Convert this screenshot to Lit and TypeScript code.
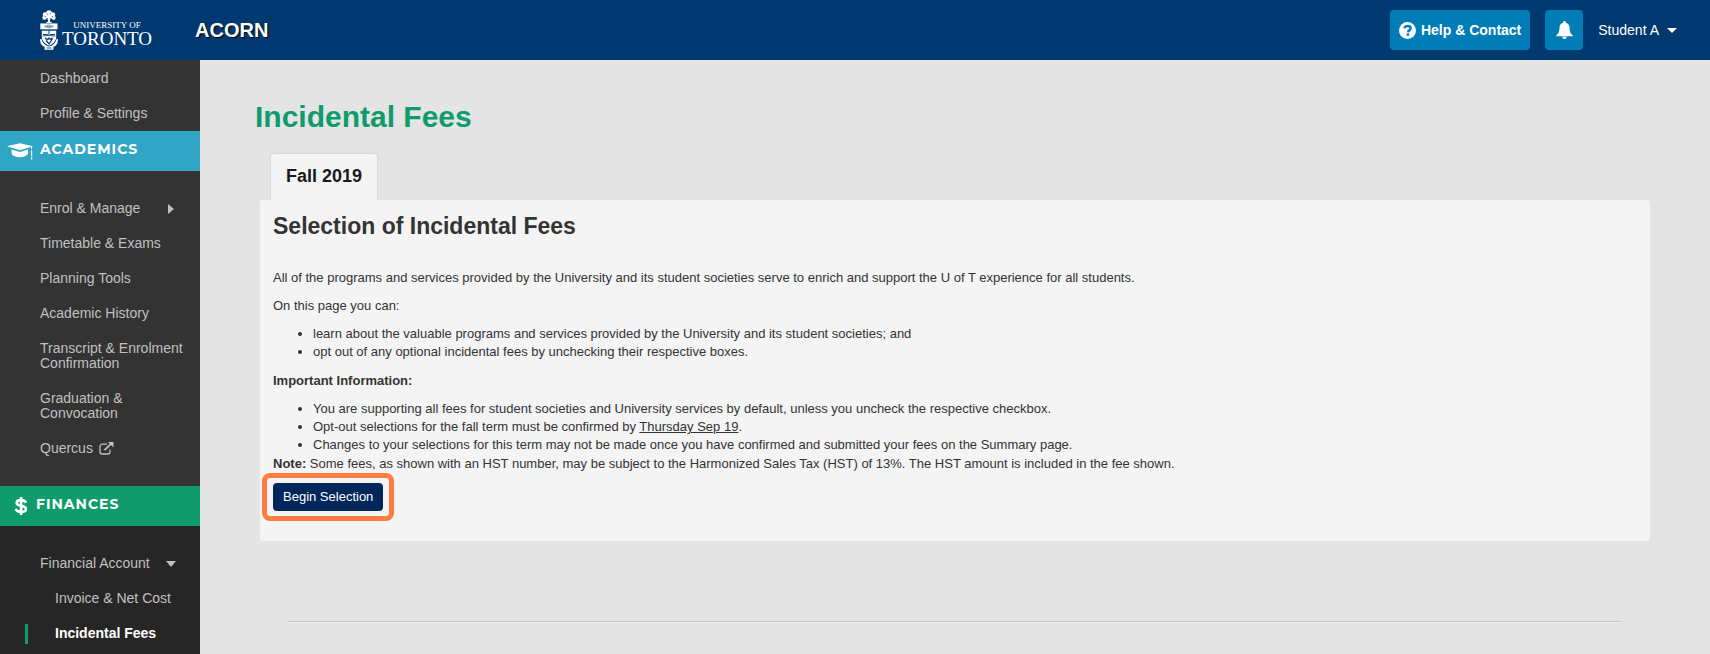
import { LitElement, html, css, svg, nothing } from "lit";
import { customElement, property } from "lit/decorators.js";
import { classMap } from "lit/directives/class-map.js";

interface NavItem {
  label: string;
  arrow?: "right" | "down";
  external?: boolean;
  nested?: boolean;
  current?: boolean;
}

const GENERAL: NavItem[] = [{ label: "Dashboard" }, { label: "Profile & Settings" }];

const ACADEMICS: NavItem[] = [
  { label: "Enrol & Manage", arrow: "right" },
  { label: "Timetable & Exams" },
  { label: "Planning Tools" },
  { label: "Academic History" },
  { label: "Transcript & Enrolment Confirmation" },
  { label: "Graduation & Convocation" },
  { label: "Quercus", external: true },
];

const FINANCES: NavItem[] = [
  { label: "Financial Account", arrow: "down" },
  { label: "Invoice & Net Cost", nested: true },
  { label: "Incidental Fees", nested: true, current: true },
];

const crest = svg`
  <svg class="crest" viewBox="0 0 18 40" width="18" height="40" aria-hidden="true">
    <g fill="#fff">
      <circle cx="9" cy="3" r="2.8"/><circle cx="5.2" cy="4.6" r="2.4"/><circle cx="12.8" cy="4.6" r="2.4"/>
      <circle cx="4.4" cy="7.8" r="2.1"/><circle cx="13.6" cy="7.8" r="2.1"/><circle cx="9" cy="6.8" r="3"/>
      <path d="M8 8h2v3.6l2.4 1.4H5.6L8 11.600z"/>
      <path d="M0.300 13.400h17.200v6.200H.3z"/>
      <path d="M1.800 20.400h14.400v6.600c0 4.200-3 7-7.200 8.800c-4.200-1.800-7.200-4.600-7.200-8.800z"/>
      <path d="M0 29l2 .6 1.200 3.400 3 2.600h5.600l3-2.600L16 29.600l2-.6-.6 4.600-2.400 2.600-1.600.6v3H4.600v-3L3 36.200.6 33.600z"/>
    </g>
    <g fill="none" stroke="#003970">
      <path d="M6.600 3.600l1 1M10.800 3.200l-1 1.200M4.600 6.200l1.200.6M13.200 6.200l-1.200.6M7 8.400l1 .6M11 8.400l-1 .6" stroke-width=".8"/>
      <path d="M4.600 16.400q4.400-3 8.800 0q-4.400 3-8.800 0zM7 16.500h4" stroke-width=".7" opacity=".75"/>
      <path d="M0 20h18" stroke-width=".9"/>
      <path d="M3 24.600h4.800M10.200 24.600H15M9 20.600v4.600" stroke-width="1"/>
      <path d="M2.600 26l6.400-.6 6.400.6" stroke-width=".8"/>
      <path d="M5 28.200l2.800 1.400 1.200-1.400 1.600 1 2-1.400M6 30.400l3 3.600 3.400-5" stroke-width="1.300"/>
      <path d="M2.200 29.800c.8 3 3 5 6.800 6.400c3.800-1.400 6-3.400 6.800-6.400" stroke-width=".8"/>
      <path d="M6.400 38h5.200" stroke-width=".8"/>
    </g>
  </svg>`;

const helpIcon = svg`
  <svg viewBox="0 0 17 17" width="17" height="17" aria-hidden="true">
    <circle cx="8.500" cy="8.500" r="8.500" fill="#fff"/>
    <path d="M5.500 6.400C5.800 4.600 7 3.900 8.600 3.900c1.700 0 3 1 3 2.500c0 1.900-2.300 1.900-2.500 3.900" fill="none" stroke="#007cb6" stroke-width="2.500"/>
    <path d="M7.600 11.400h2.600v2.400H7.600z" fill="#007cb6"/>
  </svg>`;

const bellIcon = svg`
  <svg viewBox="0 0 17 18" width="17" height="18" aria-hidden="true">
    <path fill="#fff" d="M8.500 0c.8 0 1.300.5 1.300 1.200v.5c2.500.6 3.700 2.500 3.700 5 0 3.900 1.100 6 3.200 7.600v.9H.3v-.9c2.100-1.600 3.200-3.700 3.200-7.600 0-2.500 1.200-4.400 3.700-5v-.5C7.200.5 7.700 0 8.500 0zM6.200 15.800h4.600c0 1.300-1 2.200-2.300 2.200s-2.300-.9-2.300-2.200z"/>
  </svg>`;

const capIcon = svg`
  <svg viewBox="0 0 26 17" width="26" height="17" aria-hidden="true">
    <path fill="#fff" d="M0 3.200L12.800.3 26 3.200l-1 .4v3h-.8v-2.800L13 7.200z"/>
    <path fill="#fff" d="M4.600 6.400L13 9l8-2.600v4.400c-1.200 2.200-4.200 3.400-8.200 3.400S5.600 13 4.600 10.800z"/>
    <path fill="#fff" d="M24 7.400h1.200v6H24zM23.900 14.400h1.400v2h-1.400z"/>
  </svg>`;

const dollarIcon = svg`
  <svg viewBox="0 0 12 18" width="12" height="18" aria-hidden="true">
    <path d="M10.900 5.700C10.200 3.900 8.500 3.200 6.200 3.200c-2.500 0-4.500.9-4.500 2.700 0 3.700 9.200 1.900 9.200 6 0 1.900-2 2.900-4.700 2.900-2.800 0-4.900-.9-5.500-2.900M6.100 0v18" fill="none" stroke="#fff" stroke-width="2.700"/>
  </svg>`;

const externalIcon = svg`
  <svg viewBox="0 0 15 13" width="15" height="13" aria-hidden="true">
    <path d="M8 2.200H3.200A2.200 2.200 0 0 0 1 4.400v5.400A2.200 2.200 0 0 0 3.200 12h5.600A2.200 2.200 0 0 0 11 9.800V7.600" fill="none" stroke="#c0c0c0" stroke-width="1.300"/>
    <path d="M5.600 8.200l6-6" stroke="#c0c0c0" stroke-width="1.900" fill="none"/>
    <path d="M9 0h5.500v5.500z" fill="#c0c0c0"/>
  </svg>`;

@customElement("acorn-header")
export class AcornHeader extends LitElement {
  static styles = css`
    :host {
      display: block;
      font-family: "Liberation Sans", Arial, sans-serif;
    }
    .bar {
      display: flex;
      align-items: center;
      height: 60px;
      padding: 0 33px 0 40px;
      background: #003970;
      color: #fff;
    }
    a {
      color: inherit;
      text-decoration: none;
    }
    .logo {
      display: flex;
      align-items: center;
      gap: 4px;
      width: 155px;
    }
    .crest {
      flex: none;
    }
    .wordmark {
      display: flex;
      flex-direction: column;
      align-items: center;
      padding-top: 8px;
      font-family: "Liberation Serif", "Times New Roman", serif;
      white-space: nowrap;
    }
    .upper {
      font-size: 9px;
      line-height: 10px;
    }
    .lower {
      font-size: 19px;
      line-height: 18px;
    }
    .app {
      font-size: 20px;
      font-weight: 700;
      line-height: 24px;
      text-shadow: 1px 1px 1px #000;
    }
    .actions {
      display: flex;
      align-items: center;
      gap: 15px;
      margin-left: auto;
    }
    button {
      display: flex;
      align-items: center;
      justify-content: center;
      height: 40px;
      margin: 0;
      border: 0;
      border-radius: 4px;
      background: #007cb6;
      color: #fff;
      font-family: inherit;
      font-size: 14px;
      cursor: pointer;
    }
    .help {
      gap: 5px;
      padding: 0 9px;
      font-weight: 700;
    }
    .bell {
      width: 38px;
      padding: 0;
    }
    .user {
      gap: 8px;
      padding: 0;
      background: none;
    }
    .caret {
      border: 5px solid transparent;
      border-top-color: #fff;
      border-bottom: 0;
    }
  `;

  render() {
    return html`
      <header class="bar">
        <a class="logo" href="#">
          ${crest}
          <span class="wordmark">
            <span class="upper">UNIVERSITY OF</span>
            <span class="lower">TORONTO</span>
          </span>
        </a>
        <a class="app" href="#">ACORN</a>
        <div class="actions">
          <button class="help" type="button">${helpIcon}<span>Help &amp; Contact</span></button>
          <button class="bell" type="button" aria-label="Notifications">${bellIcon}</button>
          <button class="user" type="button"><span>Student A</span><span class="caret"></span></button>
        </div>
      </header>
    `;
  }
}

@customElement("acorn-nav-list")
export class AcornNavList extends LitElement {
  @property({ attribute: false }) items: NavItem[] = [];

  static styles = css`
    :host {
      display: block;
    }
    ul {
      margin: 0;
      padding: 0;
      list-style: none;
    }
    a {
      display: flex;
      align-items: center;
      padding: 10px 12px 10px 40px;
      color: #c0c0c0;
      font-size: 14px;
      line-height: 15px;
      text-decoration: none;
    }
    .nested {
      padding-left: 55px;
    }
    .current {
      padding-left: 27px;
      margin-left: 25px;
      padding-top: 2px;
      padding-bottom: 3px;
      border-left: 3px solid #0f9b6c;
      color: #fff;
      font-weight: 700;
    }
    .holder {
      padding: 8px 0 7px;
    }
    .arrow {
      flex: none;
      border: 5px solid transparent;
    }
    .right {
      margin-left: 28px;
      border-left: 6px solid #c0c0c0;
      border-right: 0;
    }
    .down {
      margin-left: 16px;
      border-top: 6px solid #c0c0c0;
      border-bottom: 0;
    }
    svg {
      margin-left: 6px;
    }
  `;

  render() {
    return html`
      <ul>
        ${this.items.map(
          (item) => html`
            <li class=${classMap({ holder: !!item.current })}>
              <a
                href="#"
                class=${classMap({ nested: !!item.nested, current: !!item.current })}
                aria-current=${item.current ? "page" : nothing}
              >
                <span>${item.label}</span>
                ${item.arrow ? html`<span class="arrow ${item.arrow}"></span>` : nothing}
                ${item.external ? externalIcon : nothing}
              </a>
            </li>
          `
        )}
      </ul>
    `;
  }
}

@customElement("acorn-sidebar")
export class AcornSidebar extends LitElement {
  static styles = css`
    :host {
      display: block;
      font-family: "Liberation Sans", Arial, sans-serif;
    }
    nav {
      display: flex;
      flex-direction: column;
      height: 100%;
      background: #333;
    }
    .general {
      padding-top: 1px;
    }
    .group {
      padding: 20px 0;
    }
    .finance {
      flex: 1;
      padding-bottom: 0;
      background: #262626;
    }
    h2 {
      display: flex;
      align-items: center;
      height: 36px;
      margin: 0;
      padding: 0 0 4px 7px;
      background: #30a6c4;
      color: #fff;
      font-family: Montserrat, Lato, sans-serif;
      font-size: 14px;
      font-weight: 700;
      letter-spacing: 1px;
      gap: 7px;
    }
    .money {
      padding-left: 15px;
      gap: 9px;
      background: #0f9b6c;
    }
    svg {
      margin-top: 4px;
    }
  `;

  render() {
    return html`
      <nav aria-label="Main">
        <acorn-nav-list class="general" .items=${GENERAL}></acorn-nav-list>
        <h2>${capIcon}ACADEMICS</h2>
        <acorn-nav-list class="group" .items=${ACADEMICS}></acorn-nav-list>
        <h2 class="money">${dollarIcon}FINANCES</h2>
        <acorn-nav-list class="group finance" .items=${FINANCES}></acorn-nav-list>
      </nav>
    `;
  }
}

@customElement("fees-page")
export class FeesPage extends LitElement {
  static styles = css`
    :host {
      display: block;
      padding: 39px 60px 0;
      color: #333;
      font-family: "Liberation Sans", Arial, sans-serif;
      font-size: 13px;
      line-height: 18px;
    }
    h1 {
      margin: 0 -5px;
      color: #0f9b6c;
      font-size: 30px;
      line-height: 36px;
    }
    .tabs {
      display: flex;
      margin-top: 18px;
      padding-left: 10px;
    }
    .tab {
      height: 47px;
      margin: 0;
      padding: 0 15px 2px;
      border: 1px solid #dcdcdc;
      border-bottom: 0;
      border-radius: 4px 4px 0 0;
      background: #f4f4f4;
      color: #1a1a1a;
      font-family: inherit;
      font-size: 18px;
      font-weight: 700;
    }
    .panel {
      padding: 12px 13px 30px;
      border-radius: 3px;
      background: #f4f4f4;
    }
    h2 {
      margin: 0 0 29px;
      font-size: 23px;
      line-height: 28px;
    }
    p {
      margin: 0 0 10px;
    }
    ul {
      margin: 0 0 11px;
      padding-left: 40px;
    }
    .tight,
    .note {
      margin: 0;
    }
    .note {
      line-height: 20px;
    }
    .action {
      position: relative;
      width: fit-content;
      margin-top: 9px;
    }
    .action::after {
      content: "";
      position: absolute;
      inset: -10px -11px;
      border: 5px solid #fc7c41;
      border-radius: 8px;
      pointer-events: none;
    }
    .begin {
      display: block;
      height: 28px;
      margin: 0;
      padding: 0 10px 2px;
      border: 0;
      border-radius: 4px;
      background: #00265c;
      color: #fff;
      font-family: inherit;
      font-size: 13px;
      cursor: pointer;
    }
    hr {
      margin: 80px 29px 0;
      border: 0;
      border-top: 1px solid #c2c2c2;
      border-bottom: 1px solid #f0f0f0;
    }
  `;

  render() {
    return html`
      <main>
        <h1>Incidental Fees</h1>
        <div class="tabs" role="tablist">
          <button class="tab" id="fall" type="button" role="tab" aria-selected="true" aria-controls="panel">Fall 2019</button>
        </div>
        <section class="panel" id="panel" role="tabpanel" aria-labelledby="fall">
          <h2>Selection of Incidental Fees</h2>
          <p>
            All of the programs and services provided by the University and its student societies serve to enrich and
            support the U of T experience for all students.
          </p>
          <p>On this page you can:</p>
          <ul>
            <li>learn about the valuable programs and services provided by the University and its student societies; and</li>
            <li>opt out of any optional incidental fees by unchecking their respective boxes.</li>
          </ul>
          <p><strong>Important Information:</strong></p>
          <ul class="tight">
            <li>
              You are supporting all fees for student societies and University services by default, unless you uncheck
              the respective checkbox.
            </li>
            <li>Opt-out selections for the fall term must be confirmed by <u>Thursday Sep 19</u>.</li>
            <li>
              Changes to your selections for this term may not be made once you have confirmed and submitted your fees
              on the Summary page.
            </li>
          </ul>
          <p class="note">
            <strong>Note:</strong> Some fees, as shown with an HST number, may be subject to the Harmonized Sales Tax
            (HST) of 13%. The HST amount is included in the fee shown.
          </p>
          <div class="action"><button class="begin" type="button">Begin Selection</button></div>
        </section>
        <hr />
      </main>
    `;
  }
}

@customElement("app-root")
export class AppRoot extends LitElement {
  static styles = css`
    :host {
      display: flex;
      flex-direction: column;
      min-height: 100vh;
      background: #e4e4e4;
    }
    .body {
      display: flex;
      flex: 1;
    }
    acorn-sidebar {
      flex: 0 0 200px;
    }
    fees-page {
      flex: 1;
      min-width: 0;
    }
  `;

  render() {
    return html`
      <acorn-header></acorn-header>
      <div class="body">
        <acorn-sidebar></acorn-sidebar>
        <fees-page></fees-page>
      </div>
    `;
  }
}
